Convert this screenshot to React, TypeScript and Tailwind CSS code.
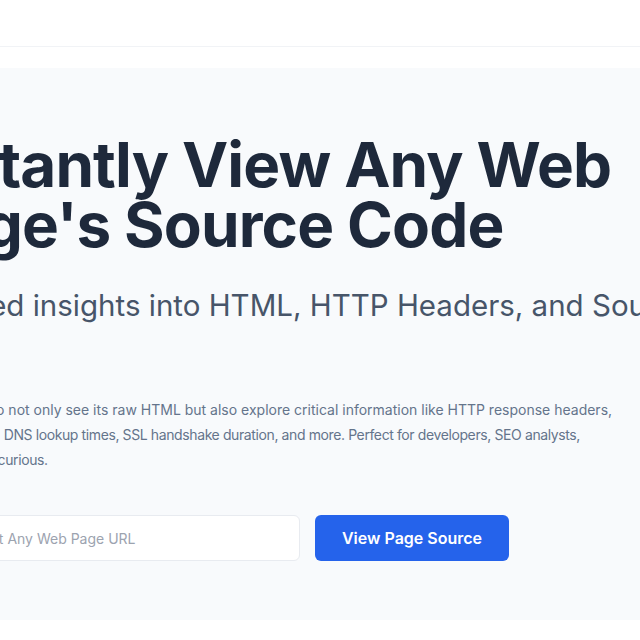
import React from "react";

export default function App() {
  return (
    <div className="min-h-[640px] w-[640px] overflow-hidden bg-white" style={{ fontFamily: "Inter, 'Noto Sans', sans-serif" }}>
      <header className="h-[47px] border-b border-[#f1f3f6] bg-white" />
      <div className="h-[21px] bg-white" />
      <section className="bg-[#f8fafc] pt-[67px] pb-[59px]">
        <div className="ml-[-90px] w-[900px]">
          <h1 className="text-[62px] font-bold leading-[60px] tracking-[-0.014em] text-[#1e293b] whitespace-nowrap">
            Instantly View Any Web
            <br />
            Page's Source Code
          </h1>
          <p className="mt-[30px] text-[29.5px] leading-[40px] text-[#475569] whitespace-nowrap">
            Detailed insights into HTML, HTTP Headers, and Source Code
          </p>
          <p className="mt-[72px] text-[14px] leading-[25px] tracking-[-0.028em] text-[#64748b] whitespace-nowrap">
            <span className="tracking-normal">
              Enter a URL to not only see its raw HTML but also explore critical information like HTTP response headers,
            </span>
            <br />
            status checks, DNS lookup times, SSL handshake duration, and more. Perfect for developers, SEO analysts,
            <br />
            and the really curious.
          </p>
          <div className="mt-[43px] flex items-center gap-[15px]">
            <div className="flex h-[46px] w-[390px] items-center rounded-[6px] border border-[#e8ebf0] bg-white pl-[11px]">
              <input
                className="w-full bg-transparent text-[14px] text-[#374151] outline-none placeholder:text-[#9ca3af]"
                placeholder="Please Input Any Web Page URL"
              />
            </div>
            <button className="h-[46px] w-[194px] rounded-[6px] bg-[#2563eb] text-[16px] font-semibold text-white">
              View Page Source
            </button>
          </div>
        </div>
      </section>
      <div className="h-[21px] bg-white" />
    </div>
  );
}
